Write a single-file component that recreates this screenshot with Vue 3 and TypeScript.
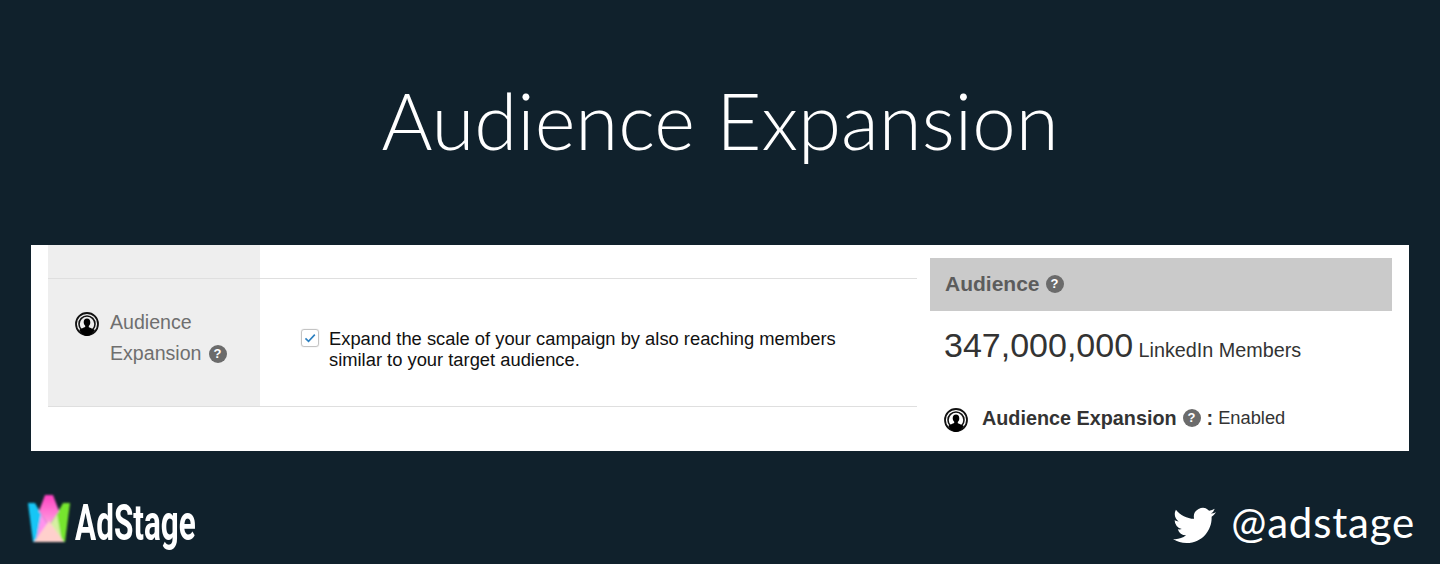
<script setup lang="ts">
const scaleText = 'Expand the scale of your campaign by also reaching members'
const scaleText2 = 'similar to your target audience.'
</script>

<template>
  <div class="slide">
    <h1 class="title">Audience Expansion</h1>
    <section class="panel">
      <div class="form">
        <div class="row top"><div class="label"></div><div class="value"></div></div>
        <div class="row main">
          <div class="label">
            <svg class="aud" viewBox="0 0 24 24" aria-hidden="true">
              <circle cx="12" cy="12" r="11" fill="none" stroke="#111" stroke-width="1.8" />
              <circle cx="12" cy="12" r="8" fill="none" stroke="#111" stroke-width="1.6" />
              <path d="M12 6.500c-2.200 0-3.300 1.700-3.300 3.800 0 1.500.6 2.800 1.500 3.500v1.300c-1.700.7-4 1.400-6 2.900C6 21.500 9.400 24 12 24s6-2.500 8-5.900c-2-1.500-4.600-2.200-6.200-2.900v-1.300c.9-.7 1.500-2 1.500-3.500 0-2.100-1.100-3.800-3.300-3.800z" fill="#000" />
            </svg>
            <div class="label-text">
              <div>Audience</div>
              <div class="line2">Expansion <span class="q">?</span></div>
            </div>
          </div>
          <div class="value">
            <span class="check">
              <svg viewBox="0 0 12 12" aria-hidden="true"><path d="M2.600 6.300 4.900 8.500 9.600 3.500" fill="none" stroke="#2b7fc0" stroke-width="1.200" /></svg>
            </span>
            <p class="desc">{{ scaleText }}<br />{{ scaleText2 }}</p>
          </div>
        </div>
      </div>
      <aside class="side">
        <div class="side-head">Audience <span class="q">?</span></div>
        <div class="reach"><span class="num">347,000,000</span> <span class="unit">LinkedIn Members</span></div>
        <div class="status">
          <svg class="aud" viewBox="0 0 24 24" aria-hidden="true">
            <circle cx="12" cy="12" r="11" fill="none" stroke="#111" stroke-width="1.8" />
            <circle cx="12" cy="12" r="8" fill="none" stroke="#111" stroke-width="1.6" />
            <path d="M12 6.500c-2.200 0-3.300 1.700-3.300 3.800 0 1.500.6 2.800 1.500 3.500v1.300c-1.700.7-4 1.400-6 2.900C6 21.500 9.400 24 12 24s6-2.500 8-5.900c-2-1.500-4.600-2.200-6.200-2.900v-1.300c.9-.7 1.500-2 1.500-3.500 0-2.100-1.100-3.800-3.300-3.800z" fill="#000" />
          </svg>
          <b>Audience Expansion</b> <span class="q">?</span> <b class="colon">:</b> <span class="enabled">Enabled</span>
        </div>
      </aside>
    </section>
    <footer class="foot">
      <div class="brand">
        <svg class="crown" viewBox="0 0 47 55" aria-hidden="true">
          <defs>
            <filter id="glow" x="-30%" y="-30%" width="160%" height="160%"><feGaussianBlur stdDeviation="1" /></filter>
            <linearGradient id="pink" x1="0" y1="0" x2="0" y2="1"><stop offset="0" stop-color="#ff3fc0" /><stop offset="1" stop-color="#ffa6e4" /></linearGradient>
          </defs>
          <g filter="url(#glow)">
            <path d="M2 11h7l14 25-13 14H7z" fill="#12c6f6" />
            <path d="M44 11h-7L23 36l13 14h3z" fill="#76e62f" />
            <path d="M19 3h8l6 16-10 15-10-15z" fill="url(#pink)" />
            <path d="M15 22l8 12-13 16z" fill="#ff93ee" />
            <path d="M31 22l-8 12 13 16z" fill="#d6efa2" />
            <path d="M23 29 38 50H8z" fill="#ffd0cc" />
          </g>
        </svg>
        <span class="word">AdStage</span>
      </div>
      <div class="handle">
        <svg class="bird" viewBox="0 0 24 24" aria-hidden="true">
          <path d="M23.950 4.570a10 10 0 0 1-2.820.770 4.960 4.960 0 0 0 2.160-2.720c-.950.550-2 .950-3.130 1.180a4.920 4.920 0 0 0-8.380 4.480C7.690 8.090 4.070 6.130 1.640 3.160a4.820 4.820 0 0 0-.660 2.470c0 1.710.870 3.210 2.190 4.100a4.900 4.900 0 0 1-2.230-.620v.060a4.920 4.920 0 0 0 3.950 4.830 5 5 0 0 1-2.210.080 4.940 4.940 0 0 0 4.600 3.420A9.870 9.870 0 0 1 0 19.540a14 14 0 0 0 7.560 2.210c9.050 0 14-7.500 14-14 0-.210 0-.420-.020-.630a9.940 9.940 0 0 0 2.460-2.550z" fill="#fff" />
        </svg>
        <span>@adstage</span>
      </div>
    </footer>
  </div>
</template>

<style>
html, body { margin: 0; background: #10212c; }
</style>

<style scoped>
.slide {
  width: 1440px;
  height: 564px;
  box-sizing: border-box;
  background: #10212c;
  display: flex;
  flex-direction: column;
  overflow: hidden;
  font-family: "Liberation Sans", Arial, sans-serif;
}
.title {
  margin: 0;
  height: 245px;
  box-sizing: border-box;
  padding-top: 70px;
  text-align: center;
  color: #fff;
  font: 300 78px/100px Lato, sans-serif;
}
.panel {
  margin: 0 31px;
  height: 206px;
  background: #fff;
  display: flex;
  padding-left: 17px;
  padding-right: 17px;
  box-sizing: border-box;
}
.form { width: 869px; flex: none; }
.row { display: flex; border-bottom: 1px solid #dfdfdf; }
.top { height: 33px; }
.main { height: 127px; }
.label { width: 212px; flex: none; background: #eeeeee; }
.main .label {
  display: flex;
  align-items: flex-start;
  box-sizing: border-box;
  padding: 28px 0 0 27px;
  color: #6f6f6f;
  font-size: 19.6px;
  line-height: 31px;
}
.aud { width: 24px; height: 24px; flex: none; }
.main .aud { margin-top: 5px; }
.label-text { margin-left: 11px; }
.line2 { display: flex; align-items: center; gap: 7px; white-space: nowrap; }
.q {
  display: inline-flex;
  align-items: center;
  justify-content: center;
  width: 18px;
  height: 18px;
  border-radius: 50%;
  background: #6b6b6b;
  color: #fff;
  font-size: 13px;
  line-height: 18px;
  font-weight: 700;
}
.value { flex: 1; }
.main .value {
  display: flex;
  align-items: flex-start;
  padding: 49px 0 0 41px;
}
.check {
  width: 16px;
  height: 16px;
  margin-top: 1px;
  border: 1px solid #c4c4c4;
  border-radius: 3px;
  box-shadow: 0 0 1px #bbb;
  flex: none;
  display: block;
}
.check svg { display: block; width: 16px; height: 16px; }
.desc {
  margin: 0 0 0 10px;
  color: #111;
  font-size: 18.35px;
  line-height: 21px;
  white-space: nowrap;
}
.side {
  flex: 1;
  margin-left: 13px;
  padding-top: 13px;
  display: flex;
  flex-direction: column;
}
.side-head {
  height: 52px;
  padding-bottom: 1px;
  background: #cacaca;
  padding-left: 15px;
  display: flex;
  align-items: center;
  gap: 6px;
  color: #5c5c5c;
  font-size: 21px;
  font-weight: 700;
}
.reach {
  margin-top: 13px;
  padding-left: 14px;
  color: #333;
  line-height: 42px;
  white-space: nowrap;
}
.num { font-size: 34px; }
.unit { font-size: 19.8px; margin-left: 1px; }
.status {
  margin-top: 31px;
  padding-left: 14px;
  display: flex;
  align-items: center;
  color: #333;
  font-size: 19.8px;
  white-space: nowrap;
}
.status .aud { margin-right: 14px; margin-top: 4px; }
.status .q { margin-left: 6px; }
.colon { margin-left: 6px; }
.enabled { margin-left: 5px; font-size: 18.3px; }
.foot {
  flex: 1;
  display: flex;
  justify-content: space-between;
  align-items: flex-start;
  padding: 42px 25px 0 26px;
}
.brand { display: flex; align-items: flex-start; }
.crown { width: 47px; height: 55px; flex: none; margin-top: -1px; }
.word {
  display: block;
  margin-left: 2px;
  margin-top: 1px;
  color: #fff;
  font: 700 50px/58px Roboto, sans-serif;
  transform: scaleX(.63);
  transform-origin: left center;
  width: 120px;
}
.handle {
  display: flex;
  align-items: center;
  gap: 15px;
  color: #fff;
  font: 400 42px/52px Lato, sans-serif;
  letter-spacing: .8px;
  margin-top: 3px;
  margin-left: -2px;
}
.bird { width: 43px; height: 43px; margin-top: 6px; }
</style>
